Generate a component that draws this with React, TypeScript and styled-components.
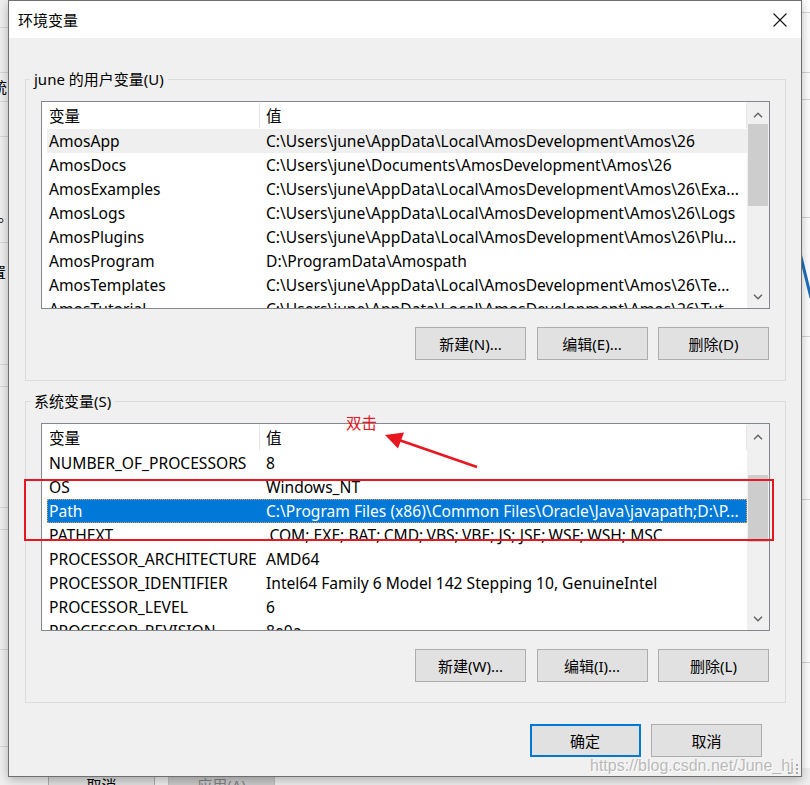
import React from "react";
import styled, { createGlobalStyle } from "styled-components";

const UI_FONT = `"Noto Sans", "Noto Sans CJK SC", sans-serif`;
const RED = "#e8161f";

const GlobalStyle = createGlobalStyle`
  html, body { margin: 0; padding: 0; }
  body { background: #f0f0f0; font-family: ${UI_FONT}; overflow: hidden; }
`;

const Desktop = styled.div`
  position: relative;
  width: 810px;
  height: 785px;
  overflow: hidden;
  background: #f0f0f0;
  font-family: ${UI_FONT};
  color: #000;
`;

/* ---------- window behind the dialog ---------- */
const BackWindow = styled.div`
  position: absolute;
  inset: 0;
  display: grid;
  grid-template-columns: 8px 1fr 9px;
  grid-template-rows: 768px 1fr;
`;

const SidePane = styled.div<{ $bg: string }>`
  display: flex;
  flex-direction: column;
  overflow: hidden;
  background: ${(p) => p.$bg};
`;

const PaneBand = styled.div<{ $h: number; $rule?: boolean }>`
  flex: none;
  height: ${(p) => p.$h}px;
  box-sizing: border-box;
  border-bottom: ${(p) => (p.$rule ? "1px solid #d6d6d6" : "0")};
  font-size: 15px;
  line-height: ${(p) => p.$h}px;
  white-space: nowrap;
  overflow: hidden;
`;

const CutGlyph = styled.span<{ $shift: number }>`
  display: inline-block;
  margin-left: ${(p) => p.$shift}px;
`;

const BackFooter = styled.div`
  grid-column: 1 / -1;
  display: flex;
  gap: 13px;
  padding-left: 48px;
  background: #f0f0f0;
`;

const BackButton = styled.div<{ $disabled?: boolean }>`
  width: 107px;
  height: 32px;
  box-sizing: border-box;
  border: 1px solid ${(p) => (p.$disabled ? "#bfbfbf" : "#adadad")};
  background: ${(p) => (p.$disabled ? "#cccccc" : "#e1e1e1")};
  color: ${(p) => (p.$disabled ? "#838383" : "#000")};
  font-size: 15px;
  line-height: 30px;
  text-align: center;
  padding-top: 1px;
`;

/* ---------- dialog ---------- */
const Dialog = styled.section`
  position: absolute;
  left: 8px;
  top: 0;
  width: 794px;
  height: 777px;
  box-sizing: border-box;
  border: 1px solid #6f6f6f;
  background: #f0f0f0;
  display: flex;
  flex-direction: column;
  box-shadow: 0 3px 10px rgba(0, 0, 0, 0.28);
`;

const TitleBar = styled.header`
  flex: none;
  height: 37px;
  background: #fff;
  display: flex;
  align-items: center;
  justify-content: space-between;
  padding: 0 14px 0 9px;
`;

const Title = styled.h1`
  margin: 0;
  font-size: 15px;
  font-weight: 400;
  line-height: 20px;
`;

const CloseButton = styled.button`
  width: 14px;
  height: 14px;
  padding: 0;
  border: 0;
  background: none;
  display: flex;
`;

const Body = styled.div`
  flex: 1;
  display: flex;
  flex-direction: column;
  padding: 0 15px 0 16px;
`;

const Group = styled.fieldset<{ $top: number }>`
  margin: ${(p) => p.$top}px 0 0;
  padding: 12px 15px 20px;
  border: 1px solid #dcdcdc;
  min-width: 0;
`;

const GroupLabel = styled.legend`
  margin-left: -11px;
  padding: 0 4px;
  font-size: 15px;
  line-height: 20px;
`;

const ListBox = styled.div`
  height: 208px;
  box-sizing: border-box;
  border: 1px solid #828790;
  background: #fff;
  display: flex;
`;

const ListViewport = styled.div`
  flex: 1;
  min-width: 0;
  overflow: hidden;
  padding-left: 5px;
  font-size: 15.6px;
`;

const HeaderRow = styled.div`
  display: grid;
  grid-template-columns: 213px 487px;
  height: 27px;
`;

const HeaderCell = styled.div<{ $pad: number }>`
  padding-left: ${(p) => p.$pad}px;
  border-right: 1px solid #e5e5e5;
  line-height: 27px;
  margin-top: 1px;
  height: 25px;
  overflow: hidden;
`;

const Row = styled.div<{ $state?: "hover" | "selected" }>`
  display: grid;
  grid-template-columns: 212px 488px;
  height: 24px;
  line-height: 24px;
  box-sizing: border-box;
  background: ${(p) =>
    p.$state === "selected" ? "#0078d7" : p.$state === "hover" ? "#efefef" : "transparent"};
  color: ${(p) => (p.$state === "selected" ? "#fff" : "#000")};
  outline: ${(p) => (p.$state === "selected" ? "1px dotted #d9a466" : "none")};
  outline-offset: -1px;
`;

const Cell = styled.div<{ $pad: number }>`
  padding-left: ${(p) => p.$pad}px;
  white-space: nowrap;
  overflow: hidden;
  text-overflow: ellipsis;
`;

const ScrollBar = styled.div`
  flex: none;
  width: 22px;
  display: flex;
  flex-direction: column;
  background: #f0f0f0;
`;

const ScrollArrow = styled.div<{ $nudge: number }>`
  flex: none;
  height: 22px;
  display: flex;
  align-items: center;
  justify-content: center;
  padding-top: ${(p) => p.$nudge}px;
  box-sizing: border-box;
`;

const ScrollTrack = styled.div`
  flex: 1;
  padding: 0 1px;
`;

const ScrollThumb = styled.div<{ $offset: number; $size: number }>`
  margin-top: ${(p) => p.$offset}px;
  height: ${(p) => p.$size}px;
  background: #cdcdcd;
`;

const ButtonRow = styled.div<{ $top: number; $right: number }>`
  display: flex;
  justify-content: flex-end;
  gap: 10.5px;
  margin-top: ${(p) => p.$top}px;
  padding-right: ${(p) => p.$right}px;
`;

const PushButton = styled.button<{ $default?: boolean }>`
  width: 111px;
  height: 33px;
  box-sizing: border-box;
  padding: 0;
  background: #e1e1e1;
  border: ${(p) => (p.$default ? "2px solid #0078d7" : "1px solid #adadad")};
  font-family: ${UI_FONT};
  font-size: 15px;
  color: #000;
`;

const SizeGrip = styled.svg`
  position: absolute;
  right: 2px;
  bottom: 1px;
`;

/* ---------- annotation overlays ---------- */
const Callout = styled.div`
  position: absolute;
  left: 24px;
  top: 479px;
  width: 750px;
  height: 62px;
  box-sizing: border-box;
  border: 2px solid ${RED};
  pointer-events: none;
`;

const CalloutNote = styled.span`
  position: absolute;
  left: 346px;
  top: 411px;
  color: ${RED};
  font-family: "Noto Sans CJK SC", sans-serif;
  font-size: 15.5px;
  line-height: 22px;
`;

const CalloutArrow = styled.svg`
  position: absolute;
  left: 380px;
  top: 425px;
  overflow: visible;
`;

const Watermark = styled.span`
  position: absolute;
  left: 590px;
  top: 756px;
  font-family: "Liberation Sans", Arial, sans-serif;
  font-size: 16px;
  line-height: 20px;
  color: rgba(165, 165, 165, 0.75);
  text-shadow: 1px 1px 0 rgba(255, 255, 255, 0.9);
  white-space: nowrap;
`;

/* ---------- data ---------- */
type RowData = { name: string; value: string; state?: "hover" | "selected" };

const userVars: RowData[] = [
  { name: "AmosApp", value: "C:\\Users\\june\\AppData\\Local\\AmosDevelopment\\Amos\\26", state: "hover" },
  { name: "AmosDocs", value: "C:\\Users\\june\\Documents\\AmosDevelopment\\Amos\\26" },
  { name: "AmosExamples", value: "C:\\Users\\june\\AppData\\Local\\AmosDevelopment\\Amos\\26\\Exa..." },
  { name: "AmosLogs", value: "C:\\Users\\june\\AppData\\Local\\AmosDevelopment\\Amos\\26\\Logs" },
  { name: "AmosPlugins", value: "C:\\Users\\june\\AppData\\Local\\AmosDevelopment\\Amos\\26\\Plu..." },
  { name: "AmosProgram", value: "D:\\ProgramData\\Amospath" },
  { name: "AmosTemplates", value: "C:\\Users\\june\\AppData\\Local\\AmosDevelopment\\Amos\\26\\Te..." },
  { name: "AmosTutorial", value: "C:\\Users\\june\\AppData\\Local\\AmosDevelopment\\Amos\\26\\Tut..." },
];

const sysVars: RowData[] = [
  { name: "NUMBER_OF_PROCESSORS", value: "8" },
  { name: "OS", value: "Windows_NT" },
  { name: "Path", value: "C:\\Program Files (x86)\\Common Files\\Oracle\\Java\\javapath;D:\\P...", state: "selected" },
  { name: "PATHEXT", value: ".COM;.EXE;.BAT;.CMD;.VBS;.VBE;.JS;.JSE;.WSF;.WSH;.MSC" },
  { name: "PROCESSOR_ARCHITECTURE", value: "AMD64" },
  { name: "PROCESSOR_IDENTIFIER", value: "Intel64 Family 6 Model 142 Stepping 10, GenuineIntel" },
  { name: "PROCESSOR_LEVEL", value: "6" },
  { name: "PROCESSOR_REVISION", value: "8e0a" },
];

type Band = { h: number; rule?: boolean; glyph?: string; shift?: number };
const leftBands: Band[] = [
  { h: 28, rule: true },
  { h: 45, rule: true },
  { h: 29, rule: true, glyph: "统", shift: -8 },
  { h: 35, rule: true },
  { h: 68 },
  { h: 20, glyph: "。", shift: -2 },
  { h: 18, rule: true },
  { h: 19 },
  { h: 20, glyph: "置", shift: -9 },
  { h: 83, rule: true },
  { h: 22, rule: true },
  { h: 121, rule: true },
  { h: 22, rule: true },
  { h: 120, rule: true },
  { h: 97, rule: true },
];

const rightBands: Band[] = [
  { h: 13, rule: true },
  { h: 60, rule: true },
  { h: 27, rule: true },
  { h: 118, rule: true },
  { h: 119, rule: true },
  { h: 163, rule: true },
  { h: 163, rule: true },
];

/* ---------- pieces ---------- */
const Chevron = ({ up }: { up: boolean }) => (
  <svg width="10" height="6" viewBox="0 0 10 6">
    <path
      d={up ? "M1 5.3 L5 1.3 L9 5.3" : "M1 0.7 L5 4.7 L9 0.7"}
      fill="none"
      stroke="#606060"
      strokeWidth="1.4"
    />
  </svg>
);

const VarList = ({
  rows,
  thumbOffset,
  thumbSize,
}: {
  rows: RowData[];
  thumbOffset: number;
  thumbSize: number;
}) => (
  <ListBox>
    <ListViewport>
      <HeaderRow>
        <HeaderCell $pad={2}>变量</HeaderCell>
        <HeaderCell $pad={6}>值</HeaderCell>
      </HeaderRow>
      {rows.map((r) => (
        <Row key={r.name} $state={r.state}>
          <Cell $pad={2}>{r.name}</Cell>
          <Cell $pad={7}>{r.value}</Cell>
        </Row>
      ))}
    </ListViewport>
    <ScrollBar>
      <ScrollArrow $nudge={3}>
        <Chevron up />
      </ScrollArrow>
      <ScrollTrack>
        <ScrollThumb $offset={thumbOffset} $size={thumbSize} />
      </ScrollTrack>
      <ScrollArrow $nudge={0}>
        <Chevron up={false} />
      </ScrollArrow>
    </ScrollBar>
  </ListBox>
);

export default function App() {
  return (
    <>
      <GlobalStyle />
      <Desktop>
        <BackWindow>
          <SidePane $bg="#f0f0f0">
            {leftBands.map((b, i) => (
              <PaneBand key={i} $h={b.h} $rule={b.rule}>
                {b.glyph && <CutGlyph $shift={b.shift ?? 0}>{b.glyph}</CutGlyph>}
              </PaneBand>
            ))}
          </SidePane>
          <div />
          <SidePane $bg="#ffffff">
            {rightBands.map((b, i) => (
              <PaneBand key={i} $h={b.h} $rule={b.rule}>
                {i === 4 && (
                  <svg width="9" height="119" viewBox="0 0 9 119">
                    <path d="M-1 35 L10 80" stroke="#1d6fbe" strokeWidth="3" fill="none" />
                  </svg>
                )}
              </PaneBand>
            ))}
          </SidePane>
          <BackFooter>
            <BackButton>取消</BackButton>
            <BackButton $disabled>应用(A)</BackButton>
          </BackFooter>
        </BackWindow>

        <Dialog>
          <TitleBar>
            <Title>环境变量</Title>
            <CloseButton aria-label="关闭">
              <svg width="14" height="14" viewBox="0 0 14 14">
                <path d="M0.5 0.5 L13.5 13.5 M13.5 0.5 L0.5 13.5" stroke="#111" strokeWidth="1.1" />
              </svg>
            </CloseButton>
          </TitleBar>
          <Body>
            <Group $top={31}>
              <GroupLabel>june 的用户变量(U)</GroupLabel>
              <VarList rows={userVars} thumbOffset={0} thumbSize={82} />
              <ButtonRow $top={18} $right={1}>
                <PushButton>新建(N)...</PushButton>
                <PushButton>编辑(E)...</PushButton>
                <PushButton>删除(D)</PushButton>
              </ButtonRow>
            </Group>
            <Group $top={10}>
              <GroupLabel>系统变量(S)</GroupLabel>
              <VarList rows={sysVars} thumbOffset={29} thumbSize={67} />
              <ButtonRow $top={18} $right={1}>
                <PushButton>新建(W)...</PushButton>
                <PushButton>编辑(I)...</PushButton>
                <PushButton>删除(L)</PushButton>
              </ButtonRow>
            </Group>
            <ButtonRow $top={21} $right={24}>
              <PushButton $default>确定</PushButton>
              <PushButton>取消</PushButton>
            </ButtonRow>
          </Body>
          <SizeGrip width="12" height="12" viewBox="0 0 12 12">
            {[
              [9, 1],
              [5, 5],
              [9, 5],
              [1, 9],
              [5, 9],
              [9, 9],
            ].map(([x, y]) => (
              <rect key={`${x}-${y}`} x={x} y={y} width="2" height="2" fill="#a8a8a8" />
            ))}
          </SizeGrip>
        </Dialog>

        <Callout />
        <CalloutNote>双击</CalloutNote>
        <CalloutArrow width="100" height="50" viewBox="0 0 100 50">
          <line x1="19" y1="15" x2="97" y2="42" stroke={RED} strokeWidth="2.5" />
          <polygon points="5,10 24,7.5 18,23.5" fill={RED} />
        </CalloutArrow>
        <Watermark>https://blog.csdn.net/June_hj</Watermark>
      </Desktop>
    </>
  );
}
